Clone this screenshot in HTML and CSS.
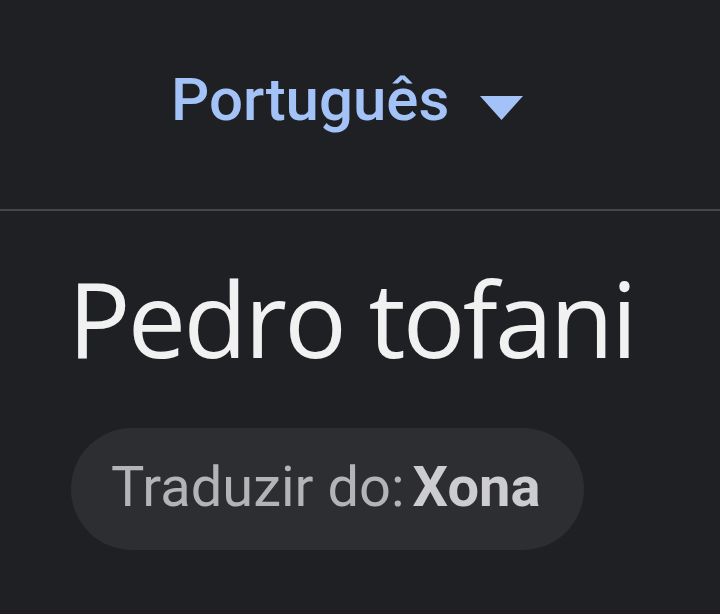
FILE: index.html
```html
<!DOCTYPE html>
<html>
<head>
<meta charset="utf-8">
<link rel="stylesheet" href="styles.css">
</head>
<body>
<div class="page">
  <header class="top">
    <div class="lang">
      <span class="lang-name">Português</span>
      <svg class="caret" width="43" height="24" viewBox="0 0 43 24"><path d="M0 0 L43 0 L21.5 24 Z" fill="#a3c2f7"/></svg>
    </div>
  </header>
  <div class="divider"></div>
  <main class="content">
    <h1 class="name">Pedro tofani</h1>
    <div class="pill"><span class="lbl">Traduzir do: </span><b class="src">Xona</b></div>
  </main>
</div>
</body>
</html>
```
FILE: styles.css
```css
html, body { margin: 0; padding: 0; }
body { background: #1f2024; width: 720px; height: 614px; overflow: hidden; font-family: Roboto, "Liberation Sans", sans-serif; }
.page { display: flex; flex-direction: column; }
.top { height: 209px; display: flex; justify-content: flex-start; }
.lang { display: flex; align-items: center; gap: 31px; padding-top: 64px; height: 72px; margin-left: 171px; }
.lang-name { color: #a3c2f7; font-size: 60px; font-weight: 500; line-height: 72px; }
.caret { margin-top: 16px; }
.divider { height: 2px; background: #46474b; }
.content { padding: 47px 0 0 68px; }
.name { margin: 0; color: #f1f1f1; font-family: "Open Sans", sans-serif; font-weight: 400; font-size: 104px; line-height: 120px; letter-spacing: -2.7px; }
.pill { margin-top: 50px; margin-left: 3px; width: 513px; height: 122px; box-sizing: border-box; border-radius: 61px; background: #2d2e32; display: flex; align-items: center; padding-left: 40px; padding-bottom: 4px; font-size: 56px; }
.lbl { color: #b4b4b7; white-space: pre; }
.src { color: #cdcdcf; font-weight: 700; margin-left: -6px; }
```
